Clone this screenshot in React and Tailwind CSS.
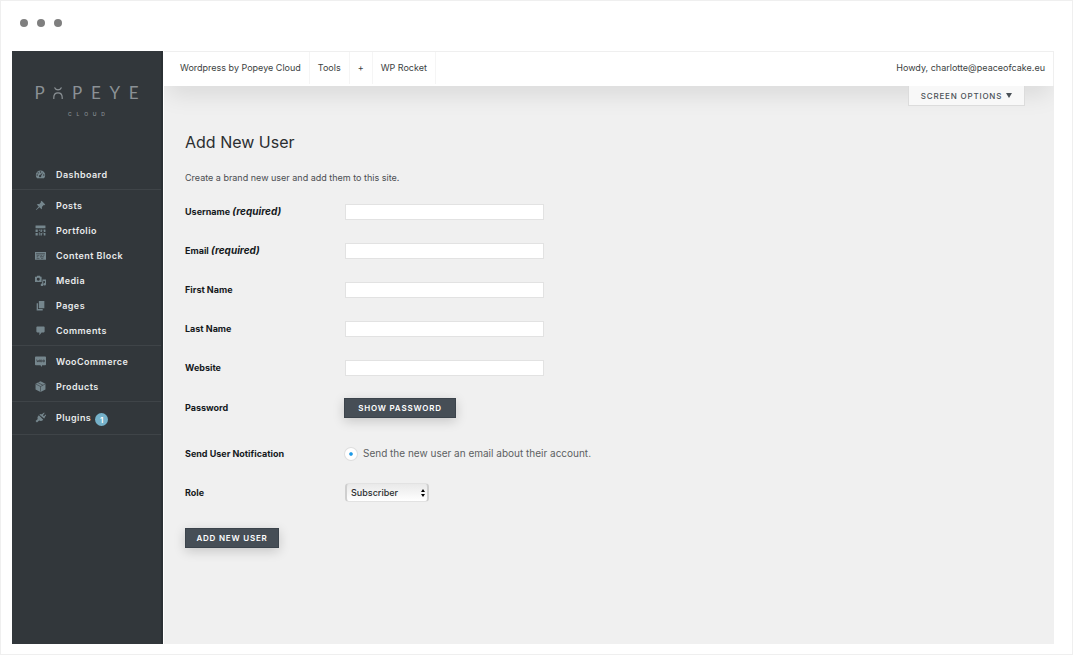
import React, { useState } from "react";

const icons = {
  dashboard: (
    <path
      fillRule="evenodd"
      d="M3.800 17A8.500 8.500 0 1 1 16.200 17zM10 4a1.300 1.300 0 1 0 0 2.600A1.300 1.300 0 0 0 10 4zM5.800 5.700a1.300 1.300 0 1 0 0 2.600 1.300 1.300 0 0 0 0-2.600zM4 9.700a1.300 1.300 0 1 0 0 2.600 1.300 1.300 0 0 0 0-2.600zM16 9.700a1.300 1.300 0 1 0 0 2.600 1.300 1.300 0 0 0 0-2.600zM14.600 5.800 9.200 11a2 2 0 1 0 2 1.400z"
    />
  ),
  pin: (
    <path d="M10.400 3 12 1.400 18.600 8 17 9.600l-1.200-.4-3.300 3.300c.5 1.800.2 3.300-.8 4.300l-3.600-3.600L2.400 18.400 1.500 17.600 6.800 12 3.200 8.400c1-1 2.500-1.300 4.300-.8l3.300-3.300z" />
  ),
  portfolio: (
    <path d="M1 1h18v5H1zM1 8h4v4.500H1zM7 8h1.500v3H7zM10 8h2.500v4.500H10zM14 8h1v3h-1zM16 8h3v4.500h-3zM1 14.500h4V19H1zM7 13h1.500v6H7zM10 14.500h2.500V19H10zM14 13h1v4h-1zM16 14.500h3V19h-3z" />
  ),
  block: (
    <path
      fillRule="evenodd"
      d="M0 3.500h20v14H0zM2 6.500v1h16v-1zM3 9v1.200h5V9zM3 11.800V13h3v-1.200zM10 9v1.200h3V9zM15 9v1.200h2V9zM9 11.800V13h7v-1.200zM3 14.500v1h5v-1zM11 14.500v1h4v-1z"
    />
  ),
  media: (
    <path
      fillRule="evenodd"
      d="M4 1.500h5L10 3h2v9.500H0V3h3zM6 5a2.700 2.700 0 1 0 0 5.400A2.700 2.700 0 0 0 6 5zM13.500 8H20v9a2.300 2.300 0 1 1-2-2.300V11h-3v7a2.300 2.300 0 1 1-2-2.300V12h.5z"
    />
  ),
  pages: <path d="M7 2h10v13H7zM3 6h2.500v10.500H14V19H3z" />,
  comment: (
    <path d="M4 2.500h12A1.500 1.500 0 0 1 17.500 4v8a1.500 1.500 0 0 1-1.500 1.500h-4L8 18.500v-5H4A1.500 1.500 0 0 1 2.500 12V4A1.500 1.500 0 0 1 4 2.500z" />
  ),
  woo: (
    <>
      <path d="M1.500 1h17A1.500 1.500 0 0 1 20 2.500v13a1.500 1.500 0 0 1-1.500 1.500H13l-1 3-2-3H1.500A1.500 1.500 0 0 1 0 15.500v-13A1.500 1.500 0 0 1 1.500 1z" />
      <path
        d="M3 6.500 4.500 11 6 8l1.500 3L8.500 6.500M10 7.500h2.500v3H10zM14.500 7.500H17v3h-2.500z"
        fill="none"
        stroke="#32373b"
        strokeWidth="1.200"
      />
    </>
  ),
  box: (
    <>
      <path d="M10 .5 19 5v10.500l-9 4.500-9-4.500V5z" />
      <path
        d="M1.500 5.500 10 10l8.500-4.500M10 10v9.500M5.500 3l9 4.700"
        fill="none"
        stroke="#32373b"
        strokeWidth="1"
      />
    </>
  ),
  plug: (
    <path d="m12.500 4 4-3 1 1-3 4 1.500 1.500 3.500-3 1 1-3 4 .5 1-1.500 1.500L8 5l1.500-1.500 1 .5zM7 6l8 8c-2 2.300-5 2.700-7.500 1.500L3.500 19 1 16.500l4-3.800C3.700 10.500 4.700 8 7 6z" />
  ),
};

const menu = [
  [{ label: "Dashboard", icon: "dashboard" }],
  [
    { label: "Posts", icon: "pin" },
    { label: "Portfolio", icon: "portfolio" },
    { label: "Content Block", icon: "block" },
    { label: "Media", icon: "media" },
    { label: "Pages", icon: "pages" },
    { label: "Comments", icon: "comment" },
  ],
  [
    { label: "WooCommerce", icon: "woo" },
    { label: "Products", icon: "box" },
  ],
  [{ label: "Plugins", icon: "plug", count: 1 }],
];

const fields = [
  { id: "username", label: "Username", required: true },
  { id: "email", label: "Email", required: true },
  { id: "first-name", label: "First Name" },
  { id: "last-name", label: "Last Name" },
  { id: "website", label: "Website" },
];

const Logo = () => (
  <div className="mx-auto flex w-[104px] flex-col items-center pt-8 text-[#8b9195]">
    <div className="flex w-full items-center justify-between font-['Lato'] text-[17px] leading-5">
      <span>P</span>
      <svg
        viewBox="0 0 10 12"
        className="h-3 w-2.5"
        fill="none"
        stroke="currentColor"
        strokeWidth="1.200"
      >
        <path d="M1.500.5C2.200 2 3.400 2.900 5 2.900S7.800 2 8.500.5M.8 12v-1.600C.8 7.600 2.500 5.800 5 5.800s4.200 1.800 4.200 4.600V12" />
      </svg>
      <span>P</span>
      <span>E</span>
      <span>Y</span>
      <span>E</span>
    </div>
    <div className="mt-2 flex w-[37px] justify-between text-[5px] leading-[6px] font-medium">
      <span>C</span>
      <span>L</span>
      <span>O</span>
      <span>U</span>
      <span>D</span>
    </div>
  </div>
);

const Sidebar = () => (
  <aside className="w-[151px] shrink-0 border-r-2 border-[#2b3034] bg-[#32373b]">
    <Logo />
    {/* Menu groups */}
    <nav className="mt-[42px]">
      {menu.map((group, index) => (
        <ul
          key={index}
          className="border-b border-[#3f4448] pt-[3px] pb-0.5 last:pb-1"
        >
          {group.map((item) => (
            <li key={item.label}>
              <a
                href="#"
                className="flex h-[25px] items-center pl-[23px] text-[9px] font-semibold tracking-wider text-[#e8eaeb]"
              >
                <svg
                  viewBox="0 0 20 20"
                  className="mr-2.5 size-[11px] fill-[#75868d]"
                >
                  {icons[item.icon]}
                </svg>
                {item.label}
                {item.count && (
                  <span className="mt-1 ml-1 flex size-[13px] items-center justify-center rounded-full bg-[#75b1c9] text-[8px] tracking-normal text-white">
                    {item.count}
                  </span>
                )}
              </a>
            </li>
          ))}
        </ul>
      ))}
    </nav>
  </aside>
);

const TopBar = () => (
  <header className="flex h-[35px] items-center justify-between border-t border-r border-[#efefef] bg-white pb-0.5 text-[9px] text-[#3c3f42] shadow-[0_12px_24px_-4px_rgba(0,0,0,0.1)]">
    <nav className="flex h-full items-stretch">
      <a href="#" className="flex items-center border-r border-[#f5f5f5] pr-2 pl-4">
        Wordpress by Popeye Cloud
      </a>
      <a href="#" className="flex items-center border-r border-[#f5f5f5] px-2">
        Tools
      </a>
      <a href="#" className="flex items-center border-r border-[#f5f5f5] px-2">
        +
      </a>
      <a href="#" className="flex items-center border-r border-[#f5f5f5] px-2">
        WP Rocket
      </a>
    </nav>
    <a href="#" className="pr-2">
      Howdy, charlotte@peaceofcake.eu
    </a>
  </header>
);

const AddUserForm = () => {
  const [notify, setNotify] = useState(true);
  const [role, setRole] = useState("Subscriber");

  return (
    <form onSubmit={(e) => e.preventDefault()}>
      {fields.map((field) => (
        <div key={field.id} className="flex h-[39px] items-center">
          <label htmlFor={field.id} className="w-40 font-bold text-[#15191c]">
            {field.label}{" "}
            {field.required && <em className="text-[10px]">(required)</em>}
          </label>
          <input
            id={field.id}
            type="text"
            className="h-4 w-[199px] border border-[#e2e2e2] bg-white px-1 outline-none"
          />
        </div>
      ))}

      <div className="mt-px mb-1.5 flex h-10 items-center">
        <span className="w-[159px] font-bold text-[#15191c]">Password</span>
        <button
          type="button"
          className="h-5 w-28 border border-[#3b434b] bg-[#464e56] text-[8px] font-semibold tracking-widest text-white shadow-[0_3px_12px_rgba(0,0,0,0.18)]"
        >
          SHOW PASSWORD
        </button>
      </div>

      <div className="flex h-[39px] items-center">
        <span className="w-40 font-bold text-[#15191c]">
          Send User Notification
        </span>
        <input
          id="notify"
          type="radio"
          checked={notify}
          onChange={() => setNotify(true)}
          className="size-3 appearance-none rounded-full border-4 border-white bg-white bg-clip-padding shadow-[0_0_0_1px_#dedede] checked:bg-[#1e9be8]"
        />
        <label htmlFor="notify" className="pl-1.5 text-[10px] text-[#5c5f62]">
          Send the new user an email about their account.
        </label>
      </div>

      <div className="flex h-[39px] items-center">
        <label htmlFor="role" className="w-40 font-bold text-[#15191c]">
          Role
        </label>
        <div className="relative">
          <select
            id="role"
            value={role}
            onChange={(e) => setRole(e.target.value)}
            className="h-[19px] w-[84px] appearance-none rounded-sm border-x-2 border-y border-x-[#cfcfcf] border-y-[#e2e2e2] bg-linear-to-b from-[#e9e9e9] to-white pl-1 text-[9px] font-medium text-[#2b2e30]"
          >
            <option>Subscriber</option>
            <option>Contributor</option>
            <option>Author</option>
            <option>Editor</option>
            <option>Administrator</option>
          </select>
          <svg
            viewBox="0 0 4 8"
            className="pointer-events-none absolute top-1.5 right-1 h-2 w-1 fill-black"
          >
            <path d="M2 0 4 3H0zM2 8 0 5h4z" />
          </svg>
        </div>
      </div>

      <button
        type="submit"
        className="mt-4 h-5 w-[94px] border border-[#3b434b] bg-[#464e56] text-[8px] font-semibold tracking-widest text-white shadow-[0_3px_12px_rgba(0,0,0,0.18)]"
      >
        ADD NEW USER
      </button>
    </form>
  );
};

const App = () => {
  return (
    <div className="flex min-h-screen flex-col border border-[#efefef] bg-white pr-[18px] pb-2.5 pl-[11px] font-['Inter',sans-serif]">
      {/* Window dots */}
      <div className="flex h-[50px] gap-[9px] pt-[18px] pl-2">
        <span className="size-2 rounded-full bg-[#7f7f7f]"></span>
        <span className="size-2 rounded-full bg-[#7f7f7f]"></span>
        <span className="size-2 rounded-full bg-[#7f7f7f]"></span>
      </div>

      <div className="flex flex-1">
        <Sidebar />
        <div className="min-w-0 flex-1 overflow-hidden border-l border-white bg-[#f0f0f0]">
          <TopBar />
          <main className="text-[9px]">
            <div className="flex justify-end pr-[29px]">
              <button
                type="button"
                className="flex h-5 w-[117px] items-center justify-center gap-1 border border-t-0 border-[#dcdcdc] bg-[#f8f8f8] text-[8px] font-medium tracking-widest text-[#4a5157]"
              >
                SCREEN OPTIONS
                <svg viewBox="0 0 6 5" className="h-[5px] w-1.5 fill-[#4a5157]">
                  <path d="M0 0h6L3 5z" />
                </svg>
              </button>
            </div>
            <div className="px-[21px]">
              <h1 className="mt-6 text-base leading-6 text-[#2b2e30]">
                Add New User
              </h1>
              <p className="mt-[18px] mb-2 leading-3 text-[#4a4d50]">
                Create a brand new user and add them to this site.
              </p>
              <AddUserForm />
            </div>
          </main>
        </div>
      </div>
    </div>
  );
};

export default App;
